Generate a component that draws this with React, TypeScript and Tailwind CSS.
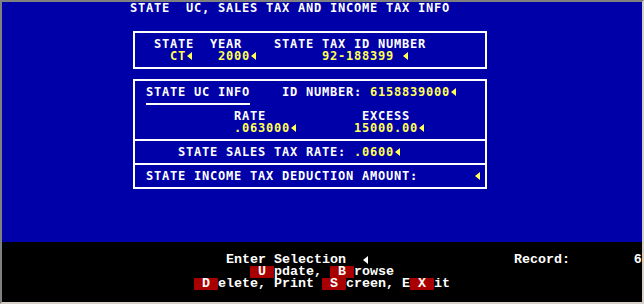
import React from 'react';

const Arrow = ({ color = '#ffff55' }: { color?: string }) => (
  <svg width="8" height="12" viewBox="0 0 8 12" className="inline-block align-top">
    <polygon points="1,6 6,2 6,10" fill={color} />
  </svg>
);

const Y = ({ children }: { children: React.ReactNode }) => (
  <span className="text-[#ffff55]">{children}</span>
);

const Hot = ({ children }: { children: React.ReactNode }) => (
  <span className="inline-block h-[12px] align-top bg-[#a80000]">{children}</span>
);

const Row = ({ children }: { children?: React.ReactNode }) => (
  <div className="h-[12px] leading-[12px] whitespace-pre">{children}</div>
);

const sp = (n: number) => ' '.repeat(n);

export default function App() {
  return (
    <div className="w-[644px] h-[304px] border-2 border-t-[#808080] border-l-[#808080] border-r-[#d4d0c8] border-b-[#d4d0c8] bg-black overflow-hidden">
      {/* blue form area, 20 text rows */}
      <div className="h-[240px] bg-[#0000a8] text-white font-bold font-['DejaVu_Sans_Mono',monospace] text-[12px] tracking-[0.775px]">
        <div className="pl-[128px]">
          <Row>STATE  UC, SALES TAX AND INCOME TAX INFO</Row>
        </div>

        {/* state / year / tax id */}
        <div className="ml-[131px] mt-[17px] w-[354px] border-2 border-white pl-[3px] py-[5px]">
          <Row>{'  STATE  YEAR    STATE TAX ID NUMBER'}</Row>
          <Row>
            {sp(4)}<Y>CT</Y><Arrow />{sp(3)}<Y>2000</Y><Arrow />{sp(8)}<Y>92-188399</Y>{' '}<Arrow />
          </Row>
        </div>

        {/* UC info, sales tax, income tax */}
        <div className="ml-[131px] mt-[10px] w-[354px] border-2 border-white">
          <div className="pl-[3px] py-[5px]">
            <Row>
              {' STATE UC INFO    ID NUMBER: '}<Y>6158839000</Y><Arrow />
            </Row>
            <div className="h-[12px] pt-[5px]">
              <div className="ml-[8px] w-[104px] h-[2px] bg-white" />
            </div>
            <Row>{sp(12) + 'RATE' + sp(12) + 'EXCESS'}</Row>
            <Row>
              {sp(12)}<Y>.063000</Y><Arrow />{sp(7)}<Y>15000.00</Y><Arrow />
            </Row>
          </div>
          <div className="border-t-2 border-white pl-[3px] py-[5px]">
            <Row>
              {'     STATE SALES TAX RATE: '}<Y>.0600</Y><Arrow />
            </Row>
          </div>
          <div className="border-t-2 border-white pl-[3px] py-[5px]">
            <Row>
              {' STATE INCOME TAX DEDUCTION AMOUNT:' + sp(7)}<Arrow />
            </Row>
          </div>
        </div>
      </div>

      {/* command area */}
      <div className="h-[60px] pt-[12px] bg-black text-white font-bold font-['Liberation_Mono',monospace] text-[13.333px]">
        <Row>
          {sp(28) + 'Enter Selection  '}<Arrow color="#ffffff" />{sp(18) + 'Record:' + sp(8) + '6'}
        </Row>
        <Row>
          {sp(31)}<Hot> U </Hot>{'pdate, '}<Hot> B </Hot>{'rowse'}
        </Row>
        <Row>
          {sp(24)}<Hot> D </Hot>{'elete, Print '}<Hot> S </Hot>{'creen, E'}<Hot> X </Hot>{'it'}
        </Row>
      </div>
    </div>
  );
}
